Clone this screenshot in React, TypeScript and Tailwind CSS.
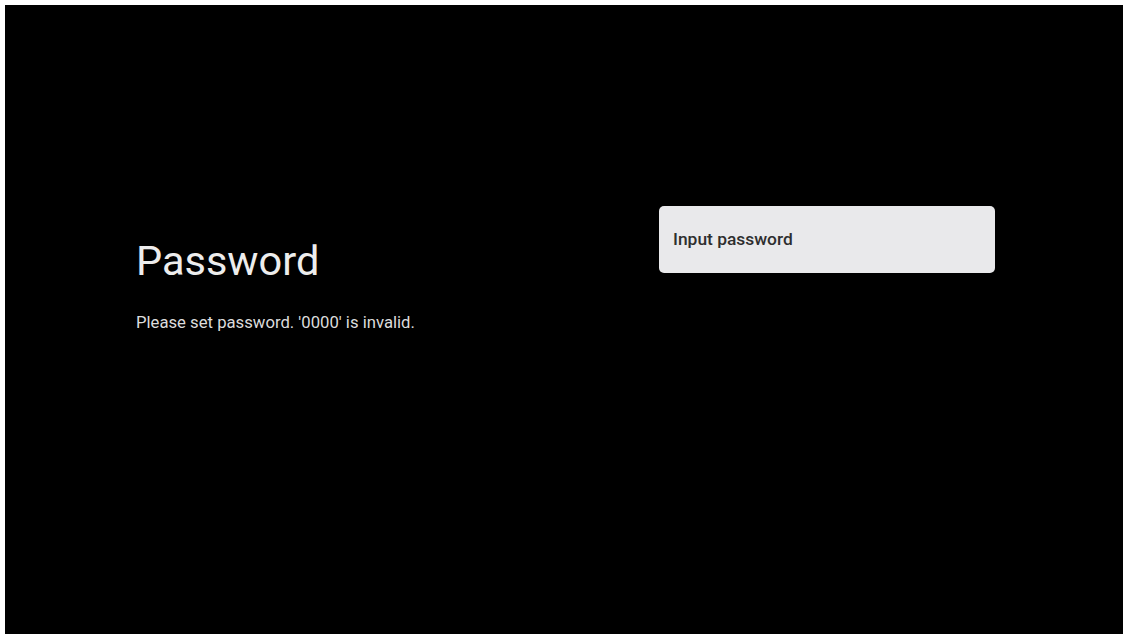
import React from 'react';

// TV setup step: set parental password
export default function App() {
    return (
        <div className="w-[1123px] h-[634px] bg-white pl-[5px] pt-[5px] overflow-hidden">
            <div
                className="w-full h-full bg-black flex"
                style={{ fontFamily: 'Roboto, "Noto Sans", sans-serif' }}
            >
                {/* Left: title and hint */}
                <div className="w-[654px] pl-[131px] pt-[230px]">
                    <h1 className="text-[41.5px] leading-[52px] text-[#ededed] font-normal">Password</h1>
                    <p className="mt-[26px] text-[16.7px] leading-[20px] text-[#dcdcdc]">
                        Please set password. '0000' is invalid.
                    </p>
                </div>

                {/* Right: input field */}
                <div className="pt-[201px]">
                    <div className="w-[336px] h-[67px] rounded-[5px] bg-[#e9e9eb] flex items-center px-[14px] pb-[1px]">
                        <span className="text-[17.4px] font-medium text-[#2e2e2e]">Input password</span>
                    </div>
                </div>
            </div>
        </div>
    );
}
